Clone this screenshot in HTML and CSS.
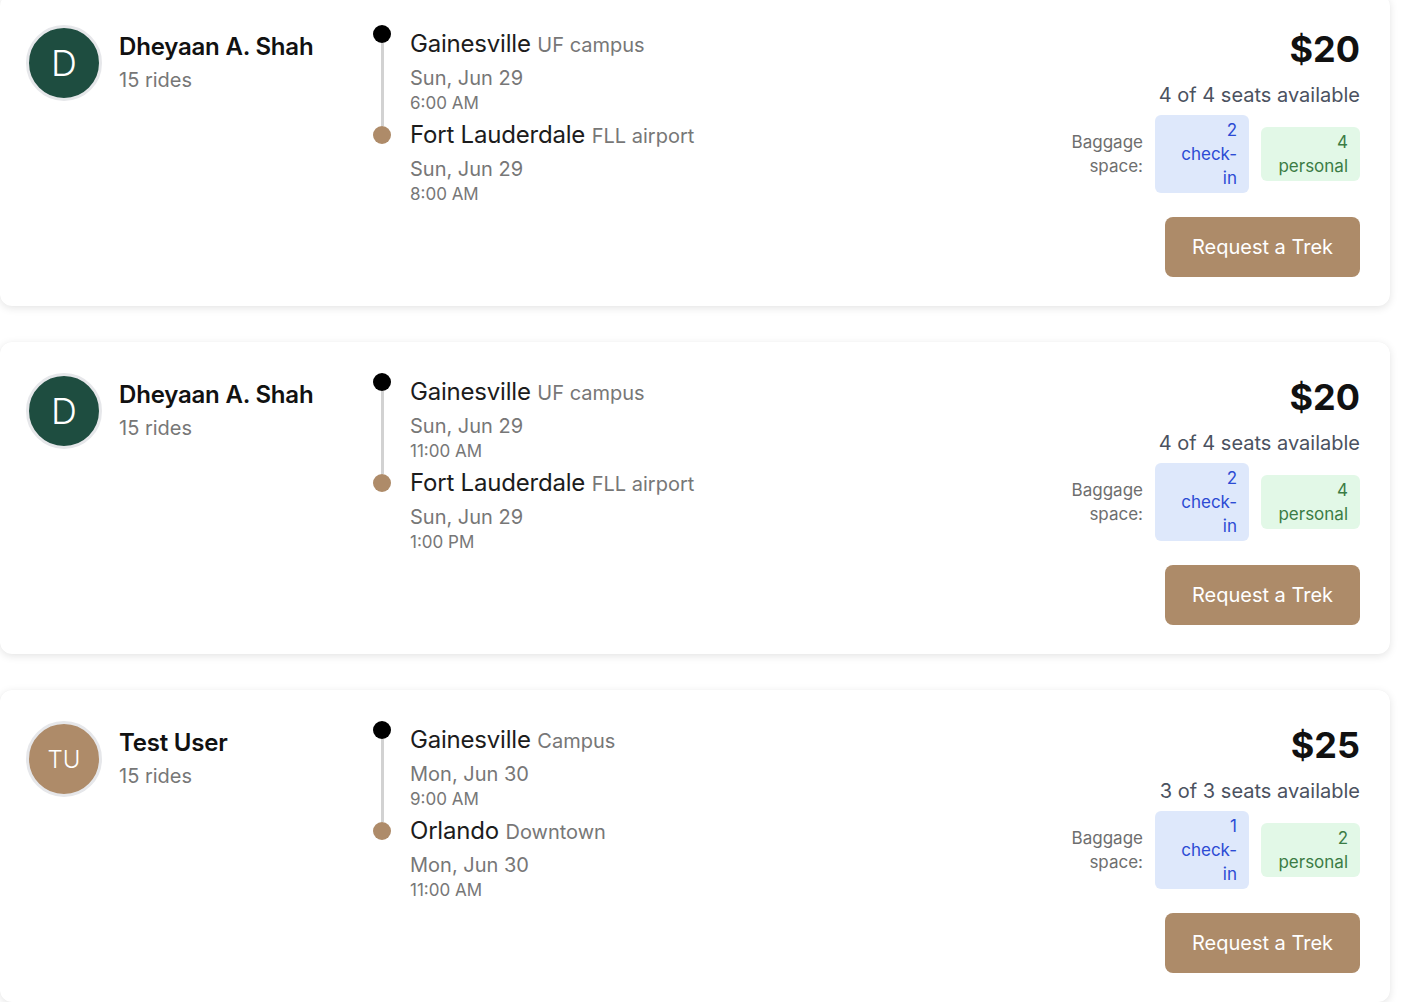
FILE: index.html
```html
<!DOCTYPE html>
<html lang="en">
<head>
<meta charset="utf-8">
<title>Treks</title>
<link rel="stylesheet" href="styles.css">
</head>
<body>
<div class="list">

  <div class="card">
    <div class="driver">
      <div class="avatar avatar-green">D</div>
      <div class="driver-info">
        <div class="driver-name">Dheyaan A. Shah</div>
        <div class="driver-rides">15 rides</div>
      </div>
    </div>
    <div class="route">
      <div class="rail"><span class="dot dot-start"></span><span class="line"></span><span class="dot dot-end"></span></div>
      <div class="stops">
        <div class="stop">
          <div class="city">Gainesville <span class="place">UF campus</span></div>
          <div class="date">Sun, Jun 29</div>
          <div class="time">6:00 AM</div>
        </div>
        <div class="stop">
          <div class="city">Fort Lauderdale <span class="place">FLL airport</span></div>
          <div class="date">Sun, Jun 29</div>
          <div class="time">8:00 AM</div>
        </div>
      </div>
    </div>
    <div class="offer">
      <div class="price">$20</div>
      <div class="seats">4 of 4 seats available</div>
      <div class="baggage">
        <div class="baggage-label">Baggage space:</div>
        <div class="badge badge-blue">2 check-in</div>
        <div class="badge badge-green">4 personal</div>
      </div>
      <button class="request">Request a Trek</button>
    </div>
  </div>

  <div class="card">
    <div class="driver">
      <div class="avatar avatar-green">D</div>
      <div class="driver-info">
        <div class="driver-name">Dheyaan A. Shah</div>
        <div class="driver-rides">15 rides</div>
      </div>
    </div>
    <div class="route">
      <div class="rail"><span class="dot dot-start"></span><span class="line"></span><span class="dot dot-end"></span></div>
      <div class="stops">
        <div class="stop">
          <div class="city">Gainesville <span class="place">UF campus</span></div>
          <div class="date">Sun, Jun 29</div>
          <div class="time">11:00 AM</div>
        </div>
        <div class="stop">
          <div class="city">Fort Lauderdale <span class="place">FLL airport</span></div>
          <div class="date">Sun, Jun 29</div>
          <div class="time">1:00 PM</div>
        </div>
      </div>
    </div>
    <div class="offer">
      <div class="price">$20</div>
      <div class="seats">4 of 4 seats available</div>
      <div class="baggage">
        <div class="baggage-label">Baggage space:</div>
        <div class="badge badge-blue">2 check-in</div>
        <div class="badge badge-green">4 personal</div>
      </div>
      <button class="request">Request a Trek</button>
    </div>
  </div>

  <div class="card">
    <div class="driver">
      <div class="avatar avatar-brown">TU</div>
      <div class="driver-info">
        <div class="driver-name">Test User</div>
        <div class="driver-rides">15 rides</div>
      </div>
    </div>
    <div class="route">
      <div class="rail"><span class="dot dot-start"></span><span class="line"></span><span class="dot dot-end"></span></div>
      <div class="stops">
        <div class="stop">
          <div class="city">Gainesville <span class="place">Campus</span></div>
          <div class="date">Mon, Jun 30</div>
          <div class="time">9:00 AM</div>
        </div>
        <div class="stop">
          <div class="city">Orlando <span class="place">Downtown</span></div>
          <div class="date">Mon, Jun 30</div>
          <div class="time">11:00 AM</div>
        </div>
      </div>
    </div>
    <div class="offer">
      <div class="price">$25</div>
      <div class="seats">3 of 3 seats available</div>
      <div class="baggage">
        <div class="baggage-label">Baggage space:</div>
        <div class="badge badge-blue">1 check-in</div>
        <div class="badge badge-green">2 personal</div>
      </div>
      <button class="request">Request a Trek</button>
    </div>
  </div>

</div>
</body>
</html>
```

FILE: styles.css
```css
* { box-sizing: border-box; }

html, body {
  margin: 0;
  padding: 0;
  background: #ffffff;
  font-family: Inter, "Noto Sans", "Liberation Sans", sans-serif;
  color: #1a1a1a;
}

.list {
  width: 1390px;
  margin-top: -6px;
  display: flex;
  flex-direction: column;
  gap: 36px;
}

.card {
  display: flex;
  align-items: flex-start;
  background: #fff;
  border-radius: 12px;
  box-shadow: 0 2px 8px rgba(0, 0, 0, 0.11), 0 0 1px rgba(0, 0, 0, 0.04);
  padding: 31px 30px 29px 26px;
}

/* driver */
.driver {
  width: 347px;
  display: flex;
  align-items: flex-start;
  gap: 17px;
}

.avatar {
  width: 76px;
  height: 76px;
  border-radius: 50%;
  border: 3px solid #e6e7ea;
  display: flex;
  align-items: center;
  justify-content: center;
  color: #fff;
  flex: none;
}
.avatar-green { background: #1e4d40; font-size: 36px; font-weight: 300; }
.avatar-brown { background: #ae8b69; font-size: 24px; font-weight: 300; }

.driver-info { padding-top: 6px; }
.driver-name {
  font-size: 24px;
  line-height: 32px;
  font-weight: 600;
  color: #111;
  letter-spacing: -0.2px;
}
.driver-rides {
  margin-top: 3px;
  font-size: 20px;
  line-height: 28px;
  color: #777;
}

/* route */
.route {
  display: flex;
  align-items: flex-start;
  gap: 19px;
}
.rail {
  display: flex;
  flex-direction: column;
  align-items: center;
  width: 18px;
}
.dot {
  width: 18px;
  height: 18px;
  border-radius: 50%;
  flex: none;
}
.dot-start { background: #000; }
.dot-end { background: #ae8b69; }
.line {
  width: 3px;
  height: 83px;
  background: #d2d2d2;
}

.stops { padding-top: 3px; }
.stop + .stop { margin-top: 5px; }
.city {
  font-size: 24px;
  line-height: 32px;
  color: #1c1c1c;
  letter-spacing: -0.2px;
}
.place {
  font-size: 20px;
  color: #777;
  letter-spacing: 0;
}
.date {
  margin-top: 3px;
  font-size: 20px;
  line-height: 28px;
  color: #777;
}
.time {
  font-size: 17px;
  line-height: 22px;
  color: #777;
}

/* offer */
.offer {
  margin-left: auto;
  display: flex;
  flex-direction: column;
  align-items: flex-end;
  text-align: right;
}
.price {
  font-size: 36px;
  line-height: 48px;
  font-weight: 700;
  color: #111;
}
.seats {
  margin-top: 8px;
  font-size: 20px;
  line-height: 28px;
  color: #4b5260;
}
.baggage {
  margin-top: 6px;
  display: flex;
  align-items: center;
  gap: 12px;
}
.baggage-label {
  width: 76px;
  font-size: 17px;
  line-height: 24px;
  color: #6e6e6e;
  text-align: right;
}
.badge {
  font-size: 17px;
  line-height: 24px;
  border-radius: 6px;
  text-align: right;
}
.badge-blue {
  width: 94px;
  padding: 3px 12px 3px 26px;
  background: #dee8fb;
  color: #2c4bd4;
}
.badge-green {
  width: 99px;
  padding: 3px 12px;
  background: #e2f8e7;
  color: #3b7c45;
}
.request {
  margin-top: 24px;
  height: 60px;
  width: 195px;
  padding: 0;
  border: none;
  border-radius: 8px;
  background: #ad8b69;
  color: #fff;
  font-family: inherit;
  font-size: 20px;
}
```
